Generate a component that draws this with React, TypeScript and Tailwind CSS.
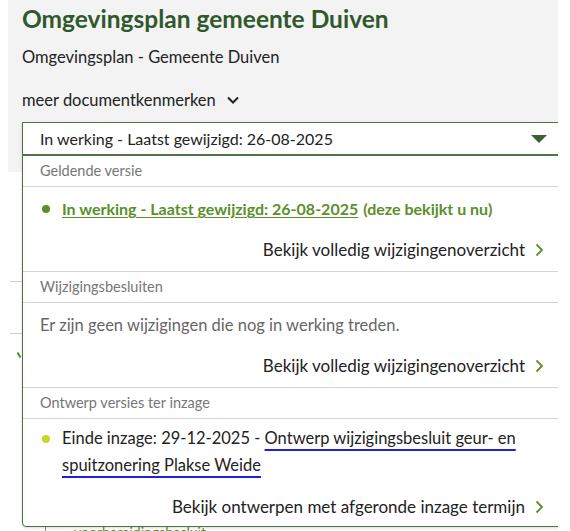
import React from "react";

const FONT = "font-['Lato',_'Open_Sans',_sans-serif]";

function Chevron() {
  return (
    <svg width="10" height="14" viewBox="0 0 10 14" className="ml-[9px] shrink-0">
      <path d="M2.5 1.5 L8 7 L2.5 12.5" fill="none" stroke="#5a8f29" strokeWidth="1.8" />
    </svg>
  );
}

function MoreLink({ label }: { label: string }) {
  return (
    <div className="flex items-center justify-end text-[17px] leading-5 text-[#222]">
      <span>{label}</span>
      <Chevron />
    </div>
  );
}

function SectionHeader({ label }: { label: string }) {
  return (
    <div className="flex h-[31px] items-center border-b border-[#d4d4d4] pl-[17px] text-[14.5px] text-[#767676]">
      {label}
    </div>
  );
}

export default function App() {
  return (
    <div className={`relative h-[531px] w-[570px] overflow-hidden bg-white ${FONT}`}>
      <div className="relative h-full w-[558px] overflow-hidden">
        {/* page behind the dropdown */}
        <div className="ml-2 h-[172px] w-[550px] bg-[#f3f3f3] pl-[14px] pt-[5px]">
          <h1 className="text-[24.5px] font-bold leading-7 text-[#30592b]">
            Omgevingsplan gemeente Duiven
          </h1>
          <p className="mt-[14px] text-[16.5px] leading-5 text-[#222]">
            Omgevingsplan - Gemeente Duiven
          </p>
          <div className="mt-[23px] flex items-center text-[16.5px] leading-5 text-[#222]">
            <span>meer documentkenmerken</span>
            <svg width="14" height="10" viewBox="0 0 14 10" className="ml-[10px]">
              <path d="M2 2.5 L7 7.5 L12 2.5" fill="none" stroke="#222" strokeWidth="2" />
            </svg>
          </div>
        </div>
        <div className="absolute left-[10px] top-[281px] h-px w-3 bg-[#cfcfcf]" />
        <div className="absolute left-[10px] top-[333px] h-px w-3 bg-[#cfcfcf]" />
        <div className="absolute left-[18px] top-[352px] h-[6px] w-[2px] rotate-[-30deg] bg-[#5a8f29]" />
        <div className="absolute left-[45px] top-[525px] h-[6px] w-px bg-[#888]" />
        <div className="absolute left-[74px] top-[524px] text-[14px] leading-4 text-[#5a8f29]">
          voorbereidingsbesluit
        </div>

        {/* version dropdown */}
        <div className="absolute left-[22px] top-[122px] w-[545px] rounded-b-[4px] border border-[#52704a] bg-white shadow-[0_1px_3px_rgba(0,0,0,0.15)]">
          <div className="flex h-[33px] items-center justify-between border-b-2 border-[#52704a] pl-[17px] pr-[18px] text-[16px] text-[#222]">
            <span>In werking - Laatst gewijzigd: 26-08-2025</span>
            <svg width="18" height="10" viewBox="0 0 18 10">
              <path d="M1 1 L17 1 L9 9 Z" fill="#3f5e37" />
            </svg>
          </div>

          <SectionHeader label="Geldende versie" />
          <div className="border-b border-[#d4d4d4] pb-[11px] pl-[17px] pr-[22px] pt-[12px]">
            <div className="flex items-center text-[16px] font-bold leading-5 text-[#5a8f29]">
              <span className="ml-[2px] mr-[12px] inline-block h-[8px] w-[8px] rounded-full bg-[#5a8f29]" />
              <span className="underline underline-offset-2">
                In werking - Laatst gewijzigd: 26-08-2025
              </span>
              <span className="ml-[5px]">(deze bekijkt u nu)</span>
            </div>
            <div className="mt-[21px]">
              <MoreLink label="Bekijk volledig wijzigingenoverzicht" />
            </div>
          </div>

          <SectionHeader label="Wijzigingsbesluiten" />
          <div className="border-b border-[#d4d4d4] pb-[11px] pl-[17px] pr-[22px] pt-[12px]">
            <p className="text-[16.5px] leading-5 text-[#666]">
              Er zijn geen wijzigingen die nog in werking treden.
            </p>
            <div className="mt-[21px]">
              <MoreLink label="Bekijk volledig wijzigingenoverzicht" />
            </div>
          </div>

          <SectionHeader label="Ontwerp versies ter inzage" />
          <div className="pb-[9px] pl-[17px] pr-[22px] pt-[6px]">
            <div className="flex items-start text-[16.5px] leading-[27px] text-[#222]">
              <span className="ml-[2px] mr-[12px] mt-[10px] inline-block h-[8px] w-[8px] shrink-0 rounded-full bg-[#c6d72e]" />
              <p className="w-[470px]">
                Einde inzage: 29-12-2025 -{" "}
                <span className="underline decoration-[#1c22d6] decoration-2 underline-offset-[5px]">
                  Ontwerp wijzigingsbesluit geur- en spuitzonering Plakse Weide
                </span>
              </p>
            </div>
            <div className="mt-[18px]">
              <MoreLink label="Bekijk ontwerpen met afgeronde inzage termijn" />
            </div>
          </div>
        </div>
      </div>
    </div>
  );
}
